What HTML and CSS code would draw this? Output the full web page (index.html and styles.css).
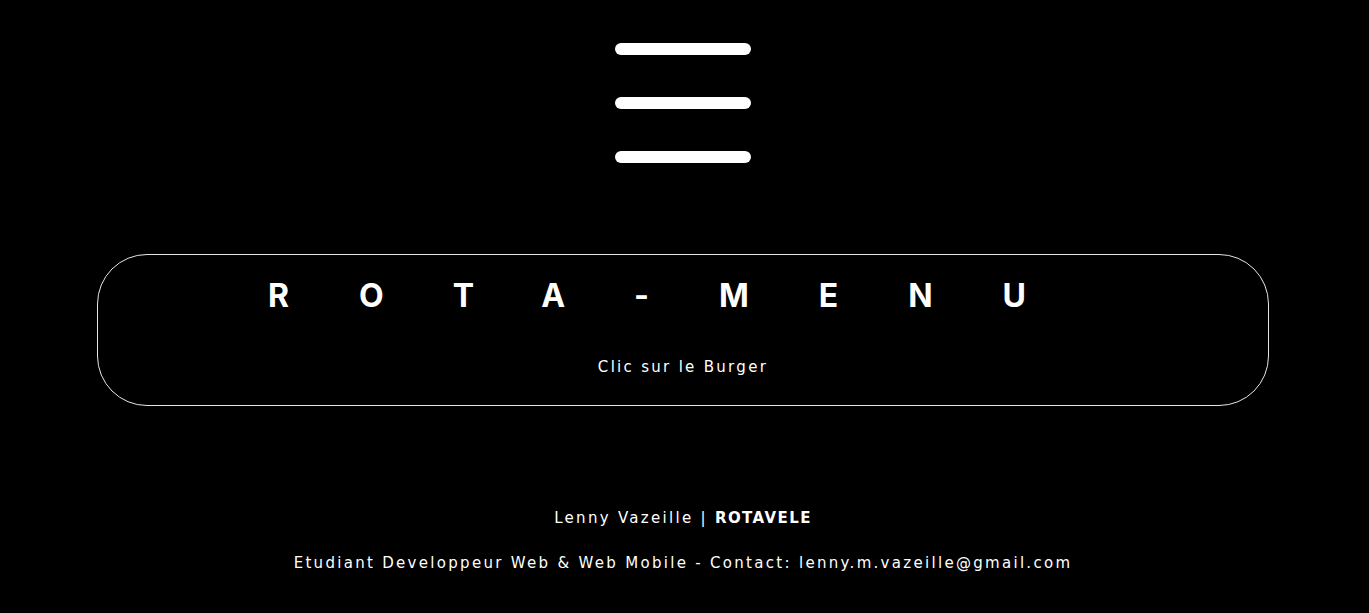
FILE: index.html
```html
<!DOCTYPE html>
<html lang="fr">
<head>
<meta charset="utf-8">
<title>Rota-Menu</title>
<link rel="stylesheet" href="styles.css">
</head>
<body>
<header class="top">
  <button class="burger" aria-label="menu">
    <span class="bar"></span>
    <span class="bar"></span>
    <span class="bar"></span>
  </button>
</header>
<main class="main">
  <section class="card">
    <h1 class="title">ROTA-MENU</h1>
    <p class="hint">Clic sur le Burger</p>
  </section>
</main>
<footer class="footer">
  <p class="line">Lenny Vazeille | <strong>ROTAVELE</strong></p>
  <p class="line">Etudiant Developpeur Web &amp; Web Mobile - Contact: lenny.m.vazeille@gmail.com</p>
</footer>
</body>
</html>
```
FILE: styles.css
```css
html, body {
  margin: 0;
  padding: 0;
  background: #000;
  color: #fff;
  font-family: "DejaVu Sans", "Inter", sans-serif;
}
body {
  height: 613px;
  overflow: hidden;
  padding-right: 3px;
}
.top {
  display: flex;
  justify-content: center;
  padding-top: 43px;
}
.burger {
  display: flex;
  flex-direction: column;
  gap: 42px;
  background: none;
  border: 0;
  padding: 0;
}
.bar {
  display: block;
  width: 136px;
  height: 12px;
  border-radius: 6px;
  background: #fff;
}
.main {
  padding: 91px 97px 0 97px;
}
.card {
  box-sizing: border-box;
  height: 152px;
  border: 1px solid #e6e6e6;
  border-radius: 50px;
  display: flex;
  flex-direction: column;
  align-items: center;
}
.title {
  margin: 24px 0 0 -2px;
  font-family: "Inter", "DejaVu Sans", sans-serif;
  font-size: 32px;
  line-height: 34px;
  font-weight: 700;
  letter-spacing: 70px;
}
.hint {
  margin: 45px 0 0 0;
  font-size: 15px;
  letter-spacing: 2.3px;
  line-height: 18px;
}
.footer {
  padding-top: 103px;
  display: flex;
  flex-direction: column;
  align-items: center;
  gap: 27px;
}
.line {
  margin: 0;
  font-size: 15px;
  line-height: 18px;
  letter-spacing: 2.3px;
}
.line strong {
  font-weight: 700;
  letter-spacing: 1.4px;
}
```
